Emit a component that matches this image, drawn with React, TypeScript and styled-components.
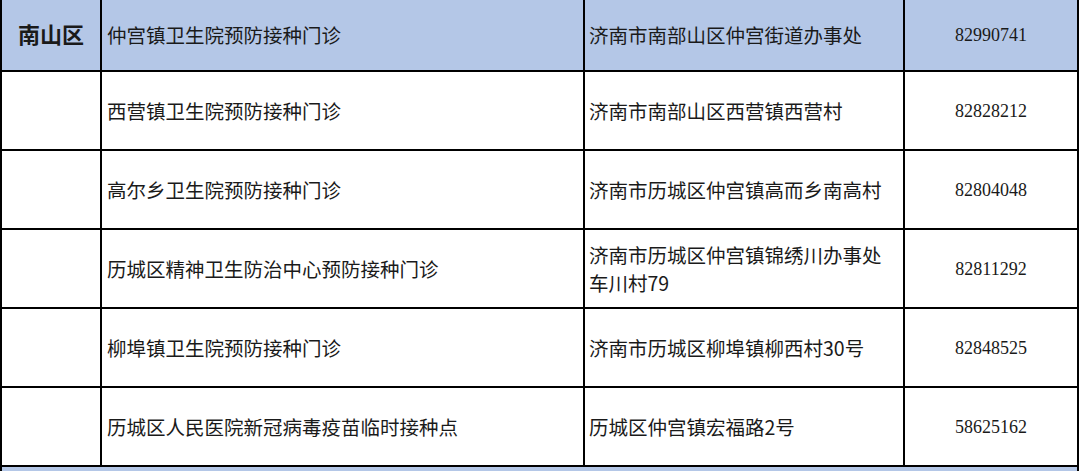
import React, { FunctionComponent } from 'react'
import styled, { createGlobalStyle } from 'styled-components'

const GlobalStyle = createGlobalStyle`
  html, body {
    margin: 0;
    padding: 0;
    background: #ffffff;
    overflow: hidden;
  }
`

const black = '#000000'
const blue = '#b4c7e7'
const ink = '#1a1a1a'

const Sheet = styled.div`
  width: 1079px;
  display: grid;
  grid-template-columns: 98px 481px 318px 172px;
  grid-template-rows: 70px repeat(5, 77px) 20px;
  gap: 2px;
  padding: 0 2px;
  box-sizing: border-box;
  width: 1079px;
  background: ${black};
`

const Cell = styled.div<{ $head?: boolean; $align?: 'left' | 'center' }>`
  display: flex;
  flex-direction: column;
  justify-content: center;
  align-items: ${(p) => (p.$align === 'center' ? 'center' : 'flex-start')};
  padding: 0 5px;
  background: ${(p) => (p.$head ? blue : '#ffffff')};
  color: ${ink};
  font-family: 'Noto Sans CJK SC', 'Noto Sans', sans-serif;
  font-size: 19.5px;
  line-height: 28px;
  white-space: nowrap;
  overflow: hidden;
`

const District = styled(Cell)`
  font-size: 22px;
  font-weight: 700;
  padding-bottom: 4px;
`

const Address = styled(Cell)`
  padding-left: 4px;
`

const Phone = styled(Cell)`
  font-family: 'Liberation Serif', 'Times New Roman', serif;
  font-size: 18px;
`

const Strip = styled.div`
  grid-column: 1 / -1;
  background: ${blue};
`

interface Site {
  name: string
  address: string[]
  phone: string
}

const sites: Site[] = [
  { name: '仲宫镇卫生院预防接种门诊', address: ['济南市南部山区仲宫街道办事处'], phone: '82990741' },
  { name: '西营镇卫生院预防接种门诊', address: ['济南市南部山区西营镇西营村'], phone: '82828212' },
  { name: '高尔乡卫生院预防接种门诊', address: ['济南市历城区仲宫镇高而乡南高村'], phone: '82804048' },
  {
    name: '历城区精神卫生防治中心预防接种门诊',
    address: ['济南市历城区仲宫镇锦绣川办事处', '车川村79'],
    phone: '82811292',
  },
  { name: '柳埠镇卫生院预防接种门诊', address: ['济南市历城区柳埠镇柳西村30号'], phone: '82848525' },
  { name: '历城区人民医院新冠病毒疫苗临时接种点', address: ['历城区仲宫镇宏福路2号'], phone: '58625162' },
]

const App: FunctionComponent = () => {
  return (
    <>
      <GlobalStyle />
      <Sheet>
        {sites.map(({ name, address, phone }, i) => {
          const head = i === 0
          return (
            <React.Fragment key={phone}>
              <District $head={head} $align="center">
                {head ? '南山区' : ''}
              </District>
              <Cell $head={head}>{name}</Cell>
              <Address $head={head}>
                {address.map((line) => (
                  <span key={line}>{line}</span>
                ))}
              </Address>
              <Phone $head={head} $align="center">
                {phone}
              </Phone>
            </React.Fragment>
          )
        })}
        <Strip />
      </Sheet>
    </>
  )
}

export default App
